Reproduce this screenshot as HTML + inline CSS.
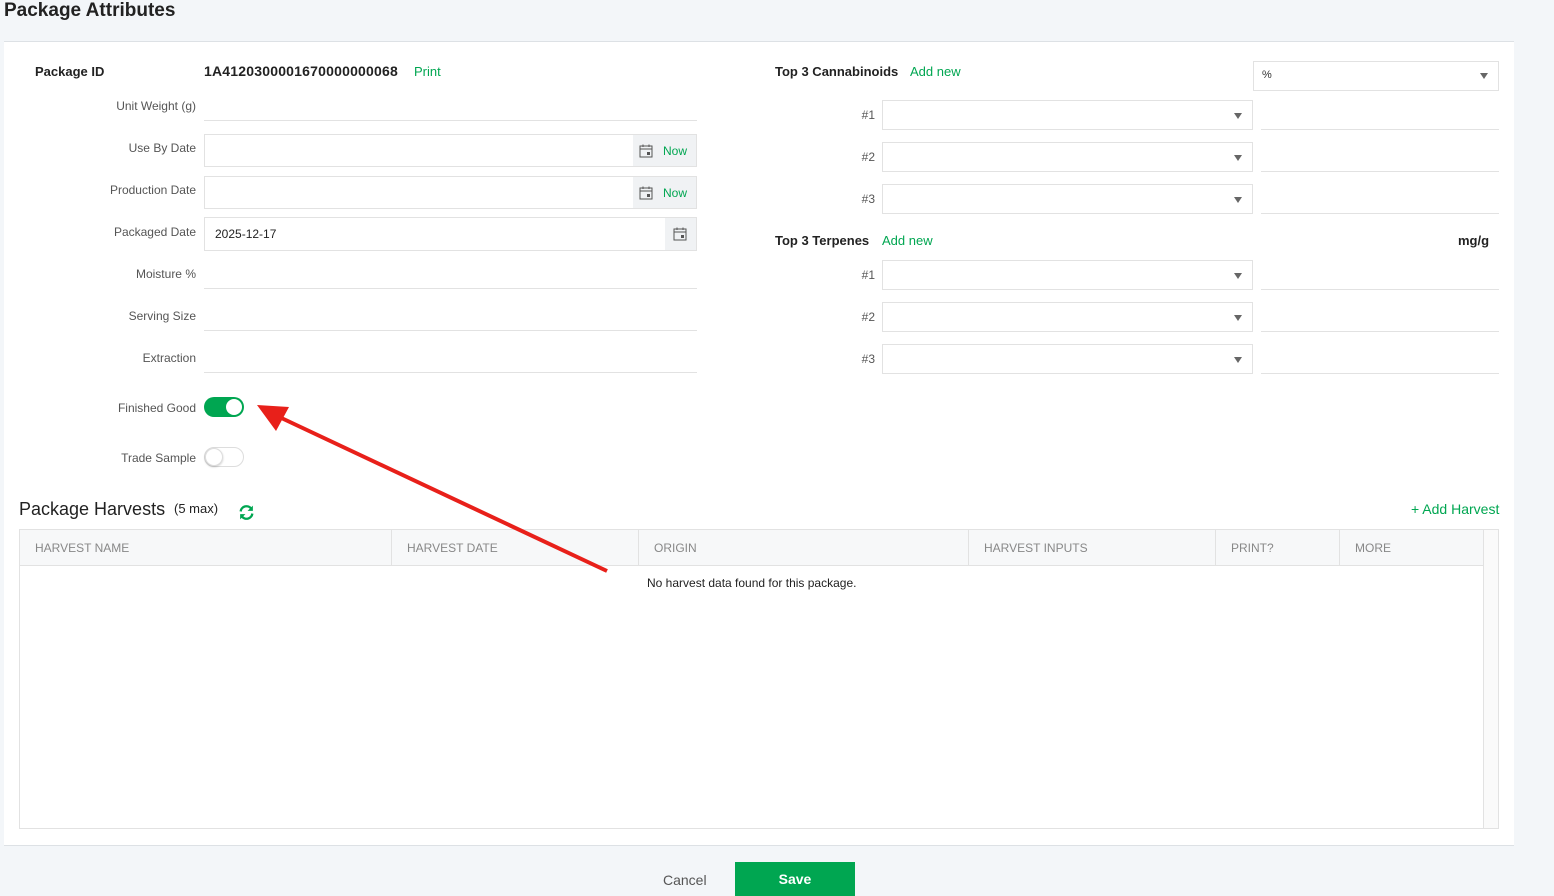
<!DOCTYPE html>
<html><head><style>
*{box-sizing:border-box;margin:0;padding:0}
body{width:1554px;height:895px;background:#f3f6f9;font-family:"Liberation Sans",Arial,sans-serif;position:relative;overflow:hidden;color:#333}
.a{position:absolute}
.panel{left:4px;top:41px;width:1510px;height:805px;background:#fff;border-top:1px solid #dde1e5;border-bottom:1px solid #dde1e5}
.lbl{font-size:12px;color:#555;text-align:right;width:160px;left:36px}
.line{height:1px;background:#e2e2e2}
.box{border:1px solid #e2e2e2;background:#fff}
.g{color:#00a651}
.addon{position:absolute;top:0;bottom:0;right:0;background:#f0f2f4;display:flex;align-items:center;padding-left:6px;font-size:12px}
.tri{position:absolute;right:10px;top:12px;width:0;height:0;border-left:4.5px solid transparent;border-right:4.5px solid transparent;border-top:6px solid #666}
.num{font-size:12px;color:#555;width:30px;text-align:right;left:845px}
.th{position:absolute;top:0;height:36px;line-height:36px;font-size:12px;color:#888;padding-left:15px;border-right:1px solid #e2e2e2}
</style></head><body>
<div class="a" style="left:4px;top:0;font-size:19px;font-weight:bold;color:#222">Package Attributes</div>
<div class="a panel"></div>

<div class="a" style="left:35px;top:64px;font-size:13px;font-weight:bold;color:#222">Package ID</div>
<div class="a" style="left:204px;top:63px;font-size:14px;font-weight:bold;color:#222;letter-spacing:0.2px">1A4120300001670000000068</div>
<div class="a g" style="left:414px;top:64px;font-size:13px">Print</div>

<div class="a lbl" style="top:99px">Unit Weight (g)</div>
<div class="a line" style="left:204px;top:120px;width:493px"></div>

<svg width="0" height="0" style="position:absolute"><defs><symbol id="cal" viewBox="0 0 14 14"><rect x="1" y="2" width="12" height="11" fill="none" stroke="#555" stroke-width="1"/><line x1="1" y1="5" x2="13" y2="5" stroke="#555"/><line x1="4" y1="0.5" x2="4" y2="3" stroke="#555"/><line x1="10" y1="0.5" x2="10" y2="3" stroke="#555"/><rect x="8" y="8" width="3" height="3" fill="#555"/></symbol></defs></svg>

<div class="a lbl" style="top:141px">Use By Date</div>
<div class="a box" style="left:204px;top:134px;width:493px;height:33px"><div class="addon" style="width:63px"><svg width="14" height="14"><use href="#cal"/></svg><span class="g" style="margin-left:10px">Now</span></div></div>
<div class="a lbl" style="top:183px">Production Date</div>
<div class="a box" style="left:204px;top:176px;width:493px;height:33px"><div class="addon" style="width:63px"><svg width="14" height="14"><use href="#cal"/></svg><span class="g" style="margin-left:10px">Now</span></div></div>
<div class="a lbl" style="top:225px">Packaged Date</div>
<div class="a box" style="left:204px;top:217px;width:493px;height:34px"><span class="a" style="left:10px;top:9px;font-size:12px;color:#222">2025-12-17</span><div class="addon" style="width:31px;padding-left:8px"><svg width="14" height="14"><use href="#cal"/></svg></div></div>

<div class="a lbl" style="top:267px">Moisture %</div>
<div class="a line" style="left:204px;top:288px;width:493px"></div>
<div class="a lbl" style="top:309px">Serving Size</div>
<div class="a line" style="left:204px;top:330px;width:493px"></div>
<div class="a lbl" style="top:351px">Extraction</div>
<div class="a line" style="left:204px;top:372px;width:493px"></div>

<div class="a lbl" style="top:401px">Finished Good</div>
<div class="a" style="left:204px;top:397px;width:40px;height:20px;border-radius:10px;background:#00a651"><div class="a" style="right:2px;top:2px;width:16px;height:16px;border-radius:50%;background:#fff"></div></div>
<div class="a lbl" style="top:451px">Trade Sample</div>
<div class="a" style="left:204px;top:447px;width:40px;height:20px;border-radius:10px;background:#fff;border:1px solid #ddd"><div class="a" style="left:0;top:0;width:18px;height:18px;border-radius:50%;background:#fff;border:1px solid #ddd;box-shadow:0 1px 2px rgba(0,0,0,.2)"></div></div>

<div class="a" style="left:775px;top:64px;font-size:13px;font-weight:bold;color:#222">Top 3 Cannabinoids</div>
<div class="a g" style="left:910px;top:64px;font-size:13px">Add new</div>
<div class="a box" style="left:1253px;top:61px;width:246px;height:30px"><span class="a" style="left:8px;top:7px;font-size:11px;color:#333">%</span><div class="tri" style="top:11px"></div></div>

<div class="a num" style="top:108px">#1</div>
<div class="a box" style="left:882px;top:100px;width:371px;height:30px"><div class="tri"></div></div>
<div class="a line" style="left:1261px;top:129px;width:238px"></div>
<div class="a num" style="top:150px">#2</div>
<div class="a box" style="left:882px;top:142px;width:371px;height:30px"><div class="tri"></div></div>
<div class="a line" style="left:1261px;top:171px;width:238px"></div>
<div class="a num" style="top:192px">#3</div>
<div class="a box" style="left:882px;top:184px;width:371px;height:30px"><div class="tri"></div></div>
<div class="a line" style="left:1261px;top:213px;width:238px"></div>

<div class="a" style="left:775px;top:233px;font-size:13px;font-weight:bold;color:#222">Top 3 Terpenes</div>
<div class="a g" style="left:882px;top:233px;font-size:13px">Add new</div>
<div class="a" style="left:1458px;top:233px;font-size:13px;font-weight:bold;color:#222">mg/g</div>

<div class="a num" style="top:268px">#1</div>
<div class="a box" style="left:882px;top:260px;width:371px;height:30px"><div class="tri"></div></div>
<div class="a line" style="left:1261px;top:289px;width:238px"></div>
<div class="a num" style="top:310px">#2</div>
<div class="a box" style="left:882px;top:302px;width:371px;height:30px"><div class="tri"></div></div>
<div class="a line" style="left:1261px;top:331px;width:238px"></div>
<div class="a num" style="top:352px">#3</div>
<div class="a box" style="left:882px;top:344px;width:371px;height:30px"><div class="tri"></div></div>
<div class="a line" style="left:1261px;top:373px;width:238px"></div>

<div class="a" style="left:19px;top:499px;font-size:18px;color:#222">Package Harvests</div>
<div class="a" style="left:174px;top:501px;font-size:13px;color:#222">(5 max)</div>
<svg class="a" style="left:238px;top:504px" width="17" height="17" viewBox="0 0 16 16"><path d="M2.5 7A5.5 5.5 0 0 1 12.5 4.5" fill="none" stroke="#00a651" stroke-width="2.2"/><path d="M14 1.5V6.5H9Z" fill="#00a651"/><path d="M13.5 9A5.5 5.5 0 0 1 3.5 11.5" fill="none" stroke="#00a651" stroke-width="2.2"/><path d="M2 14.5V9.5H7Z" fill="#00a651"/></svg>
<div class="a g" style="left:1411px;top:501px;font-size:14px">+ Add Harvest</div>

<div class="a" style="left:19px;top:529px;width:1480px;height:300px;border:1px solid #e2e2e2">
 <div class="a" style="left:0;top:0;width:1478px;height:36px;background:#f7f8f9;border-bottom:1px solid #e2e2e2"></div>
 <div class="th" style="left:0;width:372px">HARVEST NAME</div>
 <div class="th" style="left:372px;width:247px">HARVEST DATE</div>
 <div class="th" style="left:619px;width:330px">ORIGIN</div>
 <div class="th" style="left:949px;width:247px">HARVEST INPUTS</div>
 <div class="th" style="left:1196px;width:124px">PRINT?</div>
 <div class="th" style="left:1320px;width:144px">MORE</div>
 <div class="a" style="left:1463px;top:0;width:15px;height:298px;background:#fafafa;border-left:1px solid #e2e2e2"></div>
 <div class="a" style="left:627px;top:46px;font-size:12px;color:#222">No harvest data found for this package.</div>
</div>

<div class="a" style="left:663px;top:872px;font-size:14px;color:#555">Cancel</div>
<div class="a" style="left:735px;top:862px;width:120px;height:34px;background:#00a651;color:#fff;font-size:14px;font-weight:bold;text-align:center;line-height:34px">Save</div>

<svg class="a" style="left:0;top:0" width="1554" height="895"><line x1="607" y1="571" x2="275" y2="415" stroke="#e8201a" stroke-width="4"/><polygon points="257,405 289,407 276,431" fill="#e8201a"/></svg>
</body></html>
